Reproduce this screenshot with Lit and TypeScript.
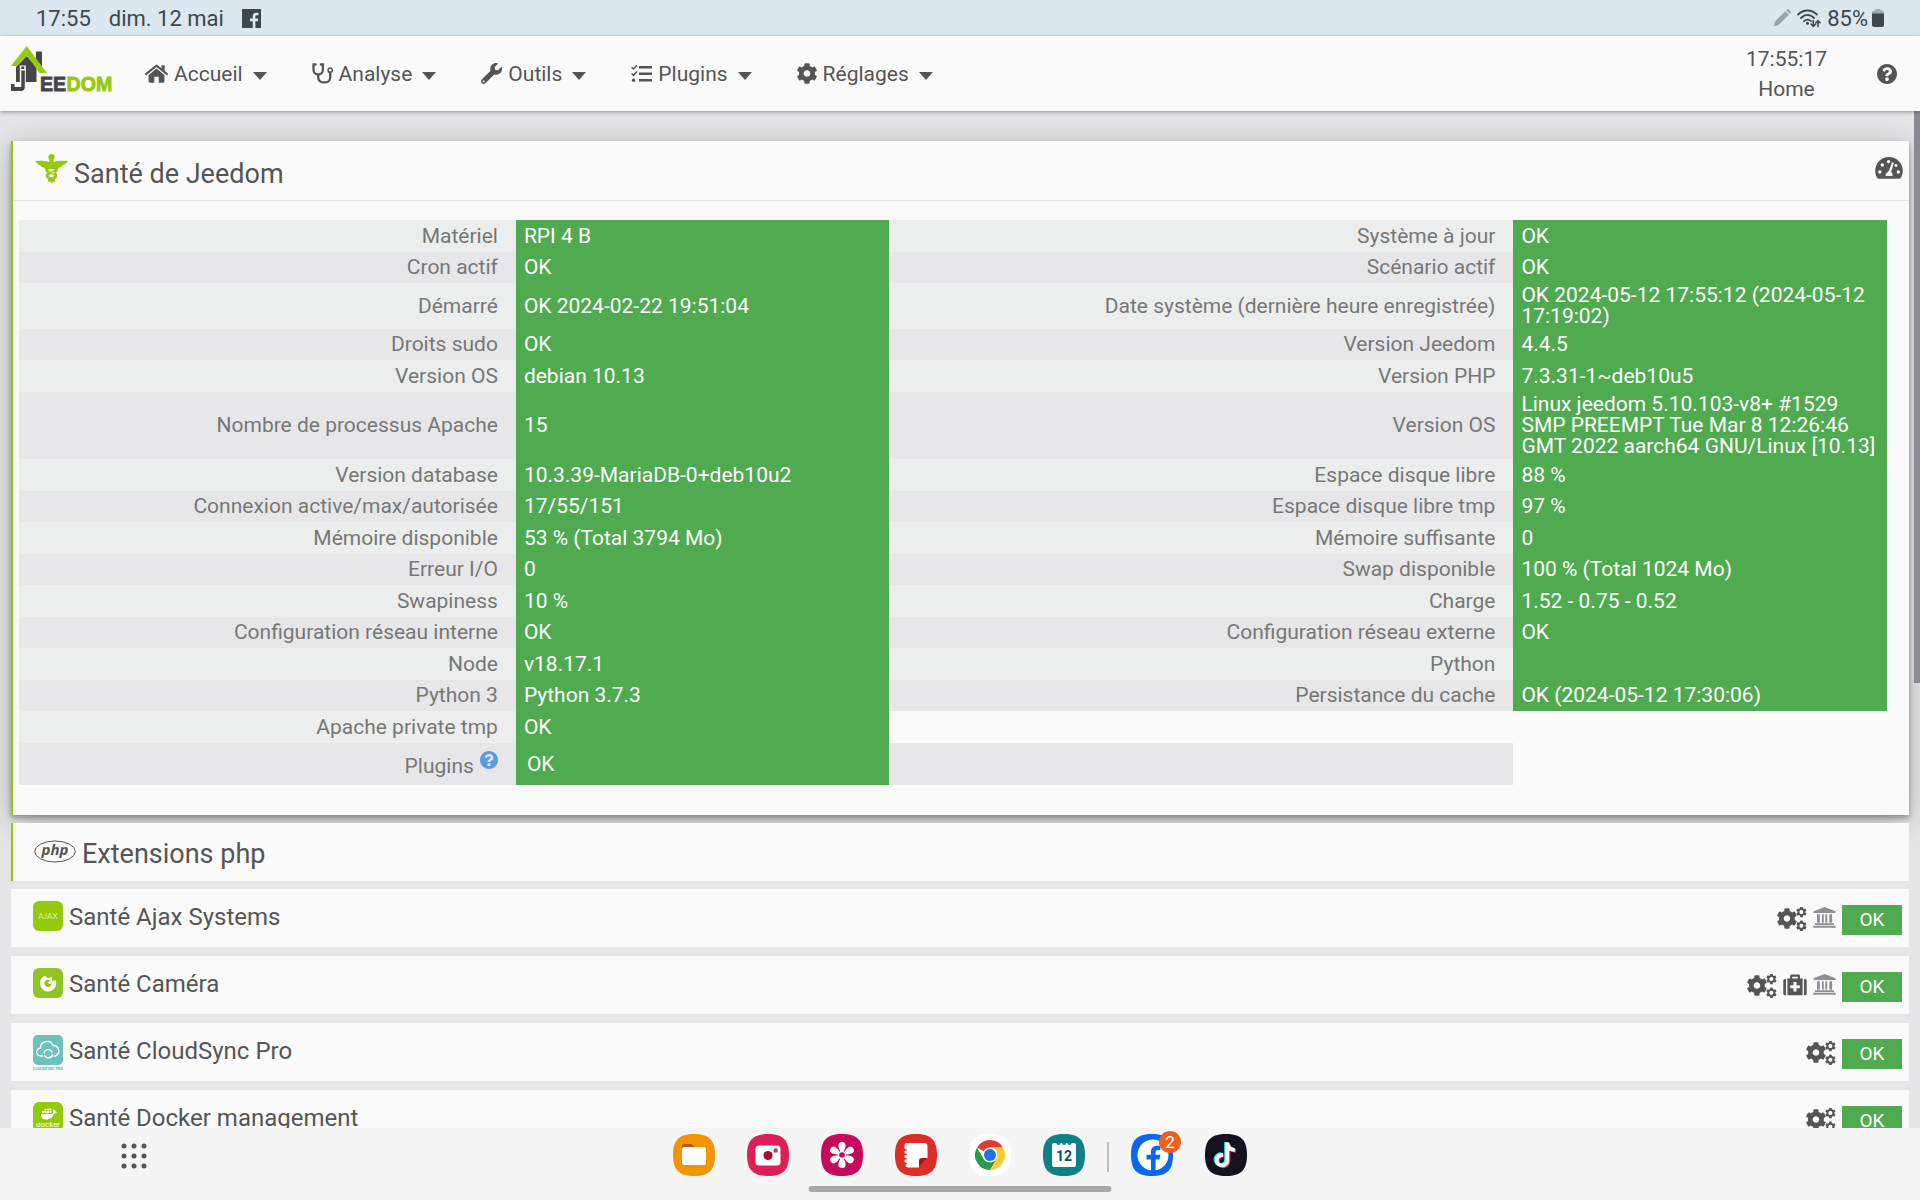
import { LitElement, html, css, svg, nothing } from "lit";
import { customElement } from "lit/decorators.js";

const COG =
  "M487.4 315.7l-42.6-24.6c4.3-23.2 4.3-47 0-70.2l42.6-24.6c4.9-2.8 7.1-8.6 5.5-14-11.1-35.6-30-67.8-54.7-94.6-3.8-4.1-10-5.1-14.8-2.3L380.8 110c-17.9-15.4-38.5-27.3-60.8-35.1V25.8c0-5.6-3.9-10.5-9.4-11.7-36.7-8.2-74.3-7.8-109.2 0-5.5 1.2-9.4 6.1-9.4 11.7V75c-22.2 7.9-42.8 19.8-60.8 35.1L88.7 85.5c-4.9-2.8-11-1.9-14.8 2.3-24.7 26.7-43.6 58.9-54.7 94.6-1.7 5.4.6 11.2 5.5 14L67.3 221c-4.3 23.2-4.3 47 0 70.2l-42.6 24.6c-4.9 2.8-7.1 8.6-5.5 14 11.1 35.6 30 67.8 54.7 94.6 3.8 4.1 10 5.1 14.8 2.3l42.6-24.6c17.9 15.4 38.5 27.3 60.8 35.1v49.2c0 5.6 3.9 10.5 9.4 11.7 36.7 8.2 74.3 7.8 109.2 0 5.5-1.2 9.4-6.1 9.4-11.7v-49.2c22.2-7.9 42.8-19.8 60.8-35.1l42.6 24.6c4.9 2.8 11 1.9 14.8-2.3 24.7-26.7 43.6-58.9 54.7-94.6 1.5-5.5-.7-11.3-5.6-14.1zM256 336c-44.1 0-80-35.9-80-80s35.9-80 80-80 80 35.9 80 80-35.9 80-80 80z";
const WRENCH =
  "M507.73 109.1c-2.24-9.03-13.54-12.09-20.12-5.51l-74.36 74.36-67.88-11.31-11.31-67.88 74.36-74.36c6.62-6.62 3.43-17.9-5.66-20.16-47.38-11.74-99.55.91-136.58 37.93-39.64 39.64-50.55 97.1-34.05 147.2L18.74 402.76c-24.99 24.99-24.99 65.51 0 90.5 24.99 24.99 65.51 24.99 90.5 0l213.21-213.21c50.12 16.71 107.47 5.68 147.37-34.22 37.07-37.07 49.7-89.32 37.91-136.73zM64 472c-13.25 0-24-10.75-24-24 0-13.26 10.75-24 24-24s24 10.74 24 24c0 13.25-10.75 24-24 24z";
const QUESTION =
  "M504 256c0 136.997-111.043 248-248 248S8 392.997 8 256C8 119.083 119.043 8 256 8s248 111.083 248 248zM262.655 90c-54.497 0-89.255 22.957-116.549 63.758-3.536 5.286-2.353 12.415 2.715 16.258l34.699 26.31c5.205 3.947 12.621 3.008 16.665-2.122 17.864-22.658 30.113-35.797 57.303-35.797 20.429 0 45.698 13.148 45.698 32.958 0 14.976-12.363 22.667-32.534 33.976C247.128 238.528 216 254.941 216 296v4c0 6.627 5.373 12 12 12h56c6.627 0 12-5.373 12-12v-1.333c0-28.462 83.186-29.647 83.186-106.667 0-58.002-60.165-102-116.531-102zM256 338c-25.365 0-46 20.635-46 46 0 25.364 20.635 46 46 46s46-20.636 46-46c0-25.365-20.635-46-46-46z";
const SQUIRCLE =
  "M21 0C36 0 42 6 42 21S36 42 21 42 0 36 0 21 6 0 21 0z";

const icon = (w: number, h: number, body: unknown, box = `0 0 ${w} ${h}`) =>
  html`<svg width=${w} height=${h} viewBox=${box} fill="currentColor" aria-hidden="true">${body}</svg>`;

const icons = {
  home: () =>
    icon(23, 19, svg`
      <path d="M11.5 4.6 3.6 11v6.6c0 .7.5 1.2 1.2 1.2h4.5v-6h4.4v6h4.5c.7 0 1.2-.5 1.2-1.2V11z"/>
      <path d="M1 10.1 11.5 1.6 22 10.1" fill="none" stroke="currentColor" stroke-width="2" stroke-linecap="round" stroke-linejoin="round"/>
      <path d="M16.5 1.2h3.2v6.5l-3.2-2.6z"/>`),
  stethoscope: () =>
    icon(21, 21, svg`
      <g fill="none" stroke="currentColor" stroke-width="2.3" stroke-linecap="round">
        <path d="M3.6 1.5H1.5V6.8a4.7 4.7 0 0 0 9.4 0V1.5H8.8"/>
        <path d="M6.2 12v2.6a4.8 4.8 0 0 0 4.8 4.8h2.4a4.8 4.8 0 0 0 4.8-4.8V9.5"/>
      </g>
      <circle cx="18.2" cy="7.2" r="2.1" fill="none" stroke="currentColor" stroke-width="1.5"/>`),
  wrench: () => icon(21, 21, svg`<path d=${WRENCH}/>`, "0 0 512 512"),
  tasks: () =>
    icon(21, 19, svg`
      <path d="M8 2h13v2.4H8zM8 8.5h13v2.4H8zM8 15h13v2.4H8z"/>
      <g fill="none" stroke="currentColor" stroke-width="1.5"><path d="M.6 3.2 2.4 5 6 1.2M.6 9.5 2.4 11.3 6 7.5"/></g>
      <circle cx="2.6" cy="16.2" r="1.7"/>`),
  cog: () => icon(20, 21, svg`<path d=${COG}/>`, "16 6 480 500"),
  question: (s: number) => icon(s, s, svg`<path d=${QUESTION}/>`, "8 8 496 496"),
  gauge: () =>
    icon(28, 22, svg`
      <path d="M14 0A13.8 13.8 0 0 0 .2 13.8c0 2.5.7 4.9 1.8 6.9.4.7 1 1 1.7 1h20.6c.7 0 1.3-.3 1.7-1a13.8 13.8 0 0 0 1.8-6.9A13.8 13.8 0 0 0 14 0z"/>
      <g fill="#fafafa"><circle cx="4.8" cy="15" r="1.7"/><circle cx="7.3" cy="8" r="1.7"/><circle cx="13.6" cy="4.6" r="1.7"/><circle cx="21" cy="8.5" r="1.4"/><circle cx="23.3" cy="15" r="1.7"/>
      <path d="M17 5.2 19 5.8 16.2 14.5 17.6 17.2V19H10.6V17.2L14 13.6z"/></g>`),
  cogs: () =>
    icon(30, 24, svg`
      <g transform="translate(-.6 1) scale(.0412)"><path d=${COG}/></g>
      <g transform="translate(19 -.4) scale(.0212)"><path d=${COG}/></g>
      <g transform="translate(19 13.4) scale(.0212)"><path d=${COG}/></g>
      <circle cx="24.4" cy="5" r="2" fill="#fafafa"/><circle cx="24.4" cy="18.8" r="2" fill="#fafafa"/>`),
  bank: () =>
    icon(23, 21, svg`
      <path d="M11.5 0 22.5 4.3V6H.5V4.3zM4 7.3h2.8v8.5H4zM8.9 7.3h1.9v8.5H8.9zM12.3 7.3h1.9v8.5h-1.9zM16.3 7.3h2.8v8.5h-2.8zM2 16.3h19V18H2zM.3 18.8h22.4v2H.3z"/>`),
  medkit: () =>
    icon(24, 22, svg`
      <path fill-rule="evenodd" d="M7 4.5V2.2C7 1.2 7.7.5 8.7.5h6.6c1 0 1.7.7 1.7 1.7v2.3h2.6V21.3H4.4V4.5zM9.2 4.5h5.6V2.8H9.2zM10.5 8v3.3H7.2v3h3.3v3.3h3v-3.3h3.3v-3h-3.3V8z"/>
      <path d="M3 4.9v16.4H2.2c-1.1 0-1.9-.8-1.9-1.9V6.8c0-1.1.8-1.9 1.9-1.9zM21 4.9h.8c1.1 0 1.9.8 1.9 1.9v12.6c0 1.1-.8 1.9-1.9 1.9H21z"/>`),
  caduceus: () =>
    icon(33, 30, svg`
      <circle cx="16.5" cy="3.2" r="3.1"/>
      <path d="M14.3 5.500h4.400v3h-4.400zM.3 7c4.700-.4 9.600-.3 13.600.9h5.200c4-1.200 8.900-1.300 13.600-.9-1.100 2.200-2.600 3.600-4.800 4.100-.8 1.500-2.200 2.400-4 2.400-.7 1-1.700 1.500-3 1.500H12.100c-1.300 0-2.300-.5-3-1.500-1.800 0-3.200-.9-4-2.400C2.900 10.600 1.400 9.200.3 7z"/>
      <g fill="none" stroke="currentColor" stroke-width="3" stroke-linecap="round">
        <path d="M12.500 13.500c-2 3 .5 4.300 4 5.300s5.500 2.400 3.500 4.400-5.500 1.600-5.600 3.200"/>
        <path d="M20.500 13.500c2 3-.5 4.300-4 5.300s-5.500 2.400-3.500 4.400 5.500 1.600 5.600 3.200"/>
      </g>
      <path d="M15.600 25h1.900v3.400a1 1 0 0 1-1.900 0z"/>
      <path d="M13 16.500c2 2 5 1.200 7 2.500M13.500 22c1.500-1.500 4-1.500 5.500-2.500" fill="none" stroke="#fafafa" stroke-width=".8"/>`),
  php: () =>
    icon(42, 23, svg`
      <ellipse cx="21" cy="11.5" rx="20.3" ry="10.5" fill="#fafafa" stroke="currentColor" stroke-width="1"/>
      <text x="21" y="15" text-anchor="middle" font-family="Open Sans, sans-serif" font-weight="700" font-style="italic" font-size="15">php</text>`),
  facebook: () =>
    icon(19, 19, svg`
      <path fill-rule="evenodd" d="M0 0h19v19H13.4v-6.7h2.5l.4-2.7h-2.9V7.7c0-.9.4-1.4 1.5-1.4h1.5V3.9c-.5-.1-1.3-.2-2-.2-2.3 0-3.7 1.3-3.7 3.7v2.2H8v2.7h2.7V19H0z"/>`),
  pencil: () =>
    icon(18, 18, svg`<path fill="#9aa5ac" d="M.5 17.5 2 12.5 12.3 2.2l3.5 3.5L5.5 16zM13.2 1.4l1-1c.6-.5 1.2-.5 1.7 0l1.7 1.7c.5.5.5 1.1 0 1.7l-1 1z"/>`),
  wifi: () =>
    icon(24, 19, svg`
      <g fill="none" stroke="currentColor" stroke-width="1.8" stroke-linecap="round">
        <path d="M1 5.6C6.5.1 14.5.1 20 5.6M4 9C8 4.9 13 4.9 17 9M7 12.2c2.2-2 4.8-2 7 0"/>
        <path stroke-width="1.6" d="M16.3 11.5v5.5M14 15l2.3 2.3L18.6 15M21 17.5V12M18.9 13.8 21 11.7l2.1 2.1"/>
      </g><circle cx="10.5" cy="14.3" r="1.5"/>`),
  battery: () =>
    icon(12, 18, svg`<path fill="#a3adb3" d="M3.5 0h5v1.5H10c1 0 2 .7 2 2V6H0V3.5c0-1.3 1-2 2-2h1.5z"/><path d="M0 4.5h12V16c0 1.2-.8 2-2 2H2c-1.2 0-2-.8-2-2z"/>`),
  apps: () =>
    icon(26, 26, [3, 13, 23].map((y) => [3, 13, 23].map((x) => svg`<circle cx=${x} cy=${y} r="2.5"/>`))),
  logo: () =>
    icon(104, 48, svg`
      <path fill="#45454b" d="M25 5.5h6v15l-6-6z"/>
      <path fill="#45454b" d="M5 21 15.7 10 25.5 21v15H5z"/>
      <path fill="#fafafa" d="M8.8 19.5h6V38h-6z"/>
      <path fill="#45454b" d="M10.3 20.5h3v2.5h-3zM10.3 24.5h3.5V41c0 2.6-1.3 4-3.8 4H0v-7h3.5v3h6.8z"/>
      <path fill="#97c90c" d="M15.7 0 0 20h6.2l9.6-10.5L28.6 27H36z"/>
      <text x="29" y="45" font-family="Liberation Sans, Arial, sans-serif" font-weight="700" font-size="19.6" fill="#45454b" stroke="#45454b" stroke-width=".8">EE</text>
      <text x="55.5" y="45" font-family="Liberation Sans, Arial, sans-serif" font-weight="700" font-size="19.6" fill="#97c90c" stroke="#97c90c" stroke-width=".8">DOM</text>`),
};

const pluginLogos: Record<string, () => unknown> = {
  ajax: () =>
    icon(30, 32, svg`<rect width="30" height="30" rx="6" fill="#93c90f"/>
      <text x="15" y="18" text-anchor="middle" font-family="Lato, sans-serif" font-size="8" fill="#dcefad">AJAX</text>`),
  camera: () =>
    icon(30, 32, svg`<rect width="30" height="30" rx="6" fill="#94c424"/>
      <path fill="#fff" d="M11.8 7.8a8.2 8.2 0 1 0 10.9 4.4l-3.5.8-.7-4.2-3.5 1.5z"/>
      <circle cx="15" cy="15.3" r="3.6" fill="#94c424"/><path fill="#fff" d="M14.8 15l2-2.5 2.5 2.5-2.5 1z"/>`),
  cloud: () =>
    icon(30, 36, svg`<rect width="30" height="30" rx="5" fill="#6fc1bd"/>
      <g fill="none" stroke="#fff" stroke-width="1.3" stroke-linecap="round"><path d="M9.5 21H8a4 4 0 0 1-.5-8 6.5 6.5 0 0 1 12.5-2.5 5.5 5.5 0 0 1 2.5 10.5H21"/>
      <path d="M11 18a4.2 4.2 0 0 1 8-.8M19.5 19.5a4.2 4.2 0 0 1-8 .8"/></g>
      <text x="15" y="34.5" text-anchor="middle" font-family="Roboto, sans-serif" font-size="3.8" font-weight="700" fill="#5bb5b1">CLOUDSYNC PRO</text>`),
  docker: () =>
    icon(30, 32, svg`<rect width="30" height="30" rx="6" fill="#93c90f"/>
      <path fill="#fff" d="M8 12h11.5l1-1.5c-.8-1.3-.4-2.5.5-3.3.9.6 1.3 1.4 1.2 2.3.6-.2 1.2 0 1.7.4-.6 1.2-1.6 1.7-2.9 1.7-1.2 3.7-4 6-8 6-3.300 0-5-2.100-5-5.600zM9 9h2v2H9zM11.500 9h2v2h-2zM14 9h2v2h-2zM16.500 9h2v2h-2zM11.500 6.800h2v1.800h-2zM14 6.800h2v1.800h-2zM16.500 6.500h2v2h-2z"/>
      <text x="15" y="24.5" text-anchor="middle" font-family="Roboto, sans-serif" font-size="8" fill="#fff">docker</text>`),
};

const squircle = (color: string, body: unknown) =>
  icon(42, 42, svg`<path d=${SQUIRCLE} fill=${color}/>${body}`);

const dockApps: { name: string; art: unknown }[] = [
  {
    name: "Mes fichiers",
    art: squircle("#f29500", svg`<path fill="#c0551b" d="M9 15v-2.5C9 11 9.8 10 11.3 10h6.5c1.5 0 2.5 1.2 3 3z"/><rect x="9" y="13" width="24" height="18" rx="2.5" fill="#fff"/>`),
  },
  {
    name: "Appareil photo",
    art: squircle("#dc1f56", svg`<rect x="8.5" y="11.5" width="25" height="20" rx="3.5" fill="#fff"/><circle cx="21" cy="21.5" r="4.6" fill="#ad0c30"/><circle cx="28.7" cy="16.5" r="2.2" fill="#c93a5c"/>`),
  },
  {
    name: "Galerie",
    art: squircle("#c50a5c", svg`
      ${[0, 60, 120, 180, 240, 300].map((a) => svg`<path fill="#fff" transform=${`rotate(${a} 21 21)`} d="M21 20c-1-2.4-3.6-5-3.6-8.5a3.6 3.6 0 0 1 7.2 0c0 3.5-2.6 6.1-3.6 8.5z"/>`)}
      <circle cx="21" cy="21" r="4.2" fill="#fff"/><circle cx="21" cy="21" r="2.8" fill="#c50a5c"/>`),
  },
  {
    name: "Notes",
    art: squircle("#e02b26", svg`<path fill="#fff" d="M11.5 9h18c1.7 0 3 1.2 3 3v12l-8.5 9.5H13c-1.5 0-2.5-1-2.5-2.5l2-1.5-3-1.5v-2l3-1-3-1.5v-2l3-1-3-1.5v-2l3-1-3-1.5C9.5 10 10 9 11.5 9z"/><path fill="#a11618" d="M24 33.5V27c0-2 .9-3 3-3h5.5z"/><path fill="#e02b26" d="M24 33.5 32.5 24V33.5z"/>`),
  },
  {
    name: "Chrome",
    art: squircle("#ffffff", svg`
      <path fill="#e33b2e" d="M21 21 8 13.5a15 15 0 0 1 26 0H21z"/>
      <path fill="#fcc934" d="M21 13.5h13A15 15 0 0 1 21 36l6.5-11.3z"/>
      <path fill="#269b48" d="M8 13.5A15 15 0 0 0 21 36l6.5-11.2L21 21l-6.5 3.8z"/>
      <circle cx="21" cy="21" r="7.5" fill="#fff"/><circle cx="21" cy="21" r="6" fill="#2271e8"/>`),
  },
  {
    name: "Calendrier",
    art: squircle("#0f8087", svg`<path fill="#fff" d="M11 9h2.5a2 2 0 0 0 4 0h1.5a2 2 0 0 0 4 0h1.5a2 2 0 0 0 4 0H31c1.3 0 2 .8 2 2v20c0 1.3-.8 2-2 2H11c-1.3 0-2-.8-2-2V11c0-1.3.8-2 2-2z"/>
      <text x="21" y="26.5" text-anchor="middle" font-family="Roboto, sans-serif" font-weight="700" font-size="14" fill="#0d4f63">12</text>`),
  },
];
const recentApps: { name: string; art: unknown; count?: number }[] = [
  {
    name: "Facebook",
    count: 2,
    art: squircle("#0a66f5", svg`<circle cx="22" cy="21" r="15.5" fill="#fff"/><path fill="#0a66f5" d="M20 37V25.5h-4.5V20.8H20v-2.9c0-4 2.3-6.2 6.2-6.2h3.2v4.3h-2.2c-1.9 0-2.6.9-2.6 2.6v2.2h4.7l-.8 4.7h-3.9V37z"/>`),
  },
  {
    name: "TikTok",
    art: squircle("#14121d", svg`
      <g fill="none" stroke-width="3.7">
        <path stroke="#35e0dc" d="M21 8v17.5a5.3 5.3 0 1 1-5.3-5.3h1M21 8.5c.5 4 3.3 6.5 7.5 6.8"/>
        <path stroke="#f5315a" d="M23.5 9.5V27a5.3 5.3 0 1 1-5.3-5.3h1M23.5 10c.5 4 3.3 6.5 7.5 6.8"/>
        <path stroke="#fff" d="M22.3 8.5v17.7a5.3 5.3 0 1 1-5.3-5.3h1M22.3 9.2c.5 4 3.3 6.5 7.5 6.8"/>
      </g>`),
  },
];

const menu: [string, () => unknown][] = [
  ["Accueil", icons.home],
  ["Analyse", icons.stethoscope],
  ["Outils", icons.wrench],
  ["Plugins", icons.tasks],
  ["Réglages", icons.cog],
];

const checks: [string, string, string?, string?][] = [
  ["Matériel", "RPI 4 B", "Système à jour", "OK"],
  ["Cron actif", "OK", "Scénario actif", "OK"],
  ["Démarré", "OK 2024-02-22 19:51:04", "Date système (dernière heure enregistrée)", "OK 2024-05-12 17:55:12 (2024-05-12 17:19:02)"],
  ["Droits sudo", "OK", "Version Jeedom", "4.4.5"],
  ["Version OS", "debian 10.13", "Version PHP", "7.3.31-1~deb10u5"],
  ["Nombre de processus Apache", "15", "Version OS", "Linux jeedom 5.10.103-v8+ #1529 SMP PREEMPT Tue Mar 8 12:26:46 GMT 2022 aarch64 GNU/Linux [10.13]"],
  ["Version database", "10.3.39-MariaDB-0+deb10u2", "Espace disque libre", "88 %"],
  ["Connexion active/max/autorisée", "17/55/151", "Espace disque libre tmp", "97 %"],
  ["Mémoire disponible", "53 % (Total 3794 Mo)", "Mémoire suffisante", "0"],
  ["Erreur I/O", "0", "Swap disponible", "100 % (Total 1024 Mo)"],
  ["Swapiness", "10 %", "Charge", "1.52 - 0.75 - 0.52"],
  ["Configuration réseau interne", "OK", "Configuration réseau externe", "OK"],
  ["Node", "v18.17.1", "Python", ""],
  ["Python 3", "Python 3.7.3", "Persistance du cache", "OK (2024-05-12 17:30:06)"],
  ["Apache private tmp", "OK"],
];

const plugins = [
  { name: "Santé Ajax Systems", logo: "ajax", tools: ["cogs", "bank"] },
  { name: "Santé Caméra", logo: "camera", tools: ["cogs", "medkit", "bank"] },
  { name: "Santé CloudSync Pro", logo: "cloud", tools: ["cogs"] },
  { name: "Santé Docker management", logo: "docker", tools: ["cogs"] },
];
const toolLabels: Record<string, string> = { cogs: "Configuration", bank: "Page market", medkit: "Santé du plugin" };

const reset = css`
  * {
    box-sizing: border-box;
  }
  svg {
    display: block;
    flex: none;
  }
  button {
    display: flex;
    align-items: center;
    border: 0;
    padding: 0;
    background: none;
    font: inherit;
    color: inherit;
    cursor: pointer;
  }
  a {
    color: inherit;
    text-decoration: none;
  }
`;

@customElement("status-bar")
class StatusBar extends LitElement {
  static styles = [
    reset,
    css`
      :host {
        display: flex;
        flex: none;
        align-items: center;
        justify-content: space-between;
        height: 36px;
        padding: 0 36px;
        background: #dbe8f0;
        color: #3d474e;
        font-size: 22px;
      }
      .group {
        display: flex;
        align-items: center;
      }
      .left {
        gap: 18px;
      }
      .right {
        gap: 6px;
      }
      .battery {
        display: flex;
        align-items: center;
        gap: 4px;
      }
    `,
  ];
  render() {
    return html`
      <div class="group left"><span>17:55</span><span>dim. 12 mai</span>${icons.facebook()}</div>
      <div class="group right">${icons.pencil()}${icons.wifi()}<span class="battery">85%${icons.battery()}</span></div>
    `;
  }
}

@customElement("nav-bar")
class NavBar extends LitElement {
  static styles = [
    reset,
    css`
      :host {
        display: flex;
        flex: none;
        align-items: center;
        height: 75px;
        padding: 0 23px 0 11px;
        background: #fafafa;
        color: #555;
        font-size: 21px;
        box-shadow: 0 1px 4px rgba(0, 0, 0, 0.4);
        z-index: 1;
      }
      .brand {
        margin: 0 30px 8px 0;
      }
      .menu {
        display: flex;
        flex: 1;
        gap: 45px;
      }
      .item {
        gap: 6px;
      }
      .caret {
        margin: 4px 0 0 4px;
        border: 7px solid transparent;
        border-top: 8px solid currentColor;
        border-bottom: 0;
      }
      .clock {
        margin-right: 50px;
        text-align: center;
        line-height: 30px;
      }
    `,
  ];
  render() {
    return html`
      <a class="brand" href="#" aria-label="Jeedom">${icons.logo()}</a>
      <nav class="menu">
        ${menu.map(([label, art]) => html`<button class="item" aria-haspopup="true">${art()}<span>${label}</span><span class="caret"></span></button>`)}
      </nav>
      <div class="clock"><div>17:55:17</div><div>Home</div></div>
      <button aria-label="Aide">${icons.question(20)}</button>
    `;
  }
}

@customElement("health-panel")
class HealthPanel extends LitElement {
  static styles = [
    reset,
    css`
      :host {
        display: block;
        padding-bottom: 30px;
        border-left: 2px solid #94ca02;
        background: #fafafa;
        box-shadow: 0 3px 5px rgba(0, 0, 0, 0.3), 0 6px 30px rgba(0, 0, 0, 0.24);
      }
      .head {
        display: flex;
        align-items: center;
        gap: 6px;
        height: 60px;
        padding: 0 6px 0 22px;
        border-bottom: 1px solid #e2e2e4;
      }
      .mark {
        margin-bottom: 3px;
        color: #94ca02;
      }
      h1 {
        flex: 1;
        margin: 7px 0 0;
        font-size: 27px;
        font-weight: 400;
      }
      .gauge {
        margin-bottom: 6px;
      }
      .body {
        padding: 19px 22px 0 6px;
      }
      table {
        width: 100%;
        table-layout: fixed;
        border-collapse: collapse;
        font-size: 21px;
        line-height: 21px;
      }
      .c1 {
        width: 26.6%;
      }
      .c2,
      .c4 {
        width: 20%;
      }
      tr {
        height: 31px;
        background: #e7e7e9;
      }
      tr:nth-child(odd) {
        height: 32px;
        background: #eceeed;
      }
      tr.last {
        height: 42px;
      }
      th,
      td {
        padding: 2px 8px;
        text-align: left;
        font-weight: 400;
      }
      th {
        padding-right: 18px;
        text-align: right;
        color: #777;
      }
      td {
        background: #50aa50;
        color: #fff;
      }
      .blank {
        background: #fafafa;
      }
      .stripe {
        background: none;
      }
      .hint {
        display: inline-block;
        margin-left: 6px;
        color: #5a9be8;
        vertical-align: 4px;
      }
      .ok {
        padding-left: 3px;
      }
    `,
  ];
  render() {
    return html`
      <div class="head">
        <span class="mark">${icons.caduceus()}</span>
        <h1><a href="#sante">Santé de Jeedom</a></h1>
        <button class="gauge" aria-label="Benchmark Jeedom">${icons.gauge()}</button>
      </div>
      <div class="body">
        <table>
          <colgroup><col class="c1" /><col class="c2" /><col /><col class="c4" /></colgroup>
          <tbody>
            ${checks.map(
              ([l1, v1, l2, v2]) => html`<tr>
                <th scope="row">${l1}</th>
                <td>${v1}</td>
                ${l2 ? html`<th scope="row">${l2}</th><td>${v2}</td>` : html`<td class="blank" colspan="2"></td>`}
              </tr>`,
            )}
            <tr class="last">
              <th scope="row">Plugins<span class="hint">${icons.question(18)}</span></th>
              <td><span class="ok">OK</span></td>
              <td class="stripe"></td>
              <td class="blank"></td>
            </tr>
          </tbody>
        </table>
      </div>
    `;
  }
}

@customElement("plugin-row")
class PluginRow extends LitElement {
  static properties = { plugin: { attribute: false } };
  declare plugin: (typeof plugins)[number];
  static styles = [
    reset,
    css`
      :host {
        display: flex;
        align-items: flex-start;
        justify-content: space-between;
        height: 58px;
        padding: 12px 7px 0 22px;
        background: #fafafa;
      }
      h2 {
        margin: 0;
        font-size: 24px;
        font-weight: 400;
        line-height: 32px;
      }
      .title {
        display: flex;
        gap: 6px;
      }
      .tools {
        display: flex;
        align-items: center;
        gap: 6px;
        padding-top: 4px;
      }
      .tool {
        height: 26px;
        align-items: flex-start;
      }
      .bank {
        color: #8e8e94;
      }
      .badge {
        width: 60px;
        background: #50aa50;
        color: #fff;
        font-size: 19px;
        line-height: 30px;
        text-align: center;
      }
    `,
  ];
  render() {
    const p = this.plugin;
    return html`
      <h2><a class="title" href="#${p.logo}">${pluginLogos[p.logo]()}<span>${p.name}</span></a></h2>
      <div class="tools">
        ${p.tools.map((t) => html`<button class="tool ${t}" aria-label=${toolLabels[t]}>${(icons as any)[t]()}</button>`)}
        <a class="badge" href="#${p.logo}">OK</a>
      </div>
    `;
  }
}

@customElement("app-dock")
class AppDock extends LitElement {
  static styles = [
    reset,
    css`
      :host {
        position: relative;
        display: flex;
        flex: none;
        justify-content: center;
        height: 72px;
        padding-top: 6px;
        background: #f5f5f5;
        color: #555;
      }
      .apps {
        position: absolute;
        left: 121px;
        top: 15px;
      }
      .group {
        display: flex;
        gap: 32px;
        height: 42px;
      }
      .divider {
        width: 2px;
        height: 30px;
        margin: 8px 22px 0;
        background: #bdbdbd;
      }
      .app {
        position: relative;
      }
      .count {
        position: absolute;
        top: -3px;
        right: -8px;
        width: 22px;
        border-radius: 11px;
        background: #ee601c;
        color: #fff;
        font-size: 17px;
        line-height: 22px;
        text-align: center;
      }
      .handle {
        position: absolute;
        bottom: 8px;
        left: 50%;
        width: 303px;
        height: 6px;
        border-radius: 3px;
        background: #a8a8a8;
        transform: translateX(-50%);
      }
    `,
  ];
  render() {
    const app = (a: { name: string; art: unknown; count?: number }) =>
      html`<button class="app" aria-label=${a.name}>${a.art}${a.count ? html`<span class="count">${a.count}</span>` : nothing}</button>`;
    return html`
      <button class="apps" aria-label="Applications">${icons.apps()}</button>
      <div class="group">${dockApps.map(app)}</div>
      <div class="divider"></div>
      <div class="group">${recentApps.map(app)}</div>
      <div class="handle"></div>
    `;
  }
}

@customElement("app-root")
class AppRoot extends LitElement {
  static styles = [
    reset,
    css`
      :host {
        display: flex;
        flex-direction: column;
        height: 100vh;
        overflow: hidden;
        background: #e6e6e8;
        color: #555;
        font-family: Roboto, "Liberation Sans", sans-serif;
      }
      main {
        position: relative;
        flex: 1;
        min-height: 0;
        overflow: hidden;
        display: flex;
        flex-direction: column;
        gap: 8px;
        padding: 30px 11px 0;
      }
      main > * {
        flex: none;
      }
      .extensions {
        position: relative;
        display: flex;
        align-items: center;
        gap: 6px;
        height: 58px;
        padding-left: 21px;
        border-left: 2px solid #94ca02;
        background: #fafafa;
      }
      .extensions svg {
        margin-bottom: 2px;
      }
      .extensions h1 {
        margin: 4px 0 0;
        font-size: 27px;
        font-weight: 400;
      }
      .rows {
        position: relative;
        display: grid;
        gap: 9px;
      }
      .thumb {
        position: absolute;
        top: 0;
        right: 0;
        width: 6px;
        height: 572px;
        background: #8b8a93;
      }
    `,
  ];
  render() {
    return html`
      <status-bar></status-bar>
      <nav-bar></nav-bar>
      <main>
        <health-panel></health-panel>
        <section class="extensions">${icons.php()}<h1><a href="#php">Extensions php</a></h1></section>
        <div class="rows">${plugins.map((p) => html`<plugin-row .plugin=${p}></plugin-row>`)}</div>
        <div class="thumb"></div>
      </main>
      <app-dock></app-dock>
    `;
  }
}
